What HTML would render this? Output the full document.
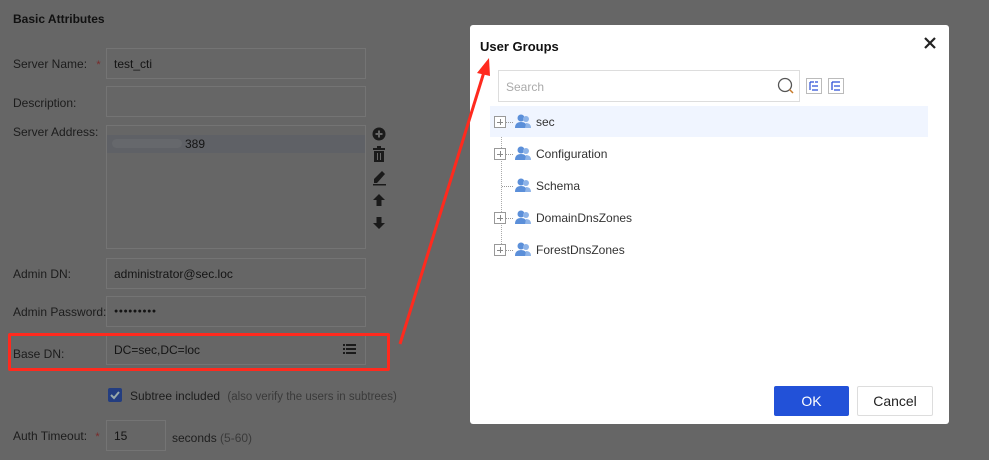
<!DOCTYPE html>
<html><head><meta charset="utf-8"><style>
*{box-sizing:border-box;margin:0;padding:0}
body{width:989px;height:460px;overflow:hidden;background:#666;font-family:"Liberation Sans",Arial,sans-serif;color:#1e1e1e;position:relative}
.a{position:absolute}
.lbl{position:absolute;font-size:12px;color:#1c1c1c;left:13px}
.inp{position:absolute;left:106px;width:260px;height:31px;border:1px solid #747474;background:#666;font-size:12px;padding:8px 0 0 7px;color:#141414}
.star{color:#7a2a2a;font-size:11px}
.dlg{position:absolute;left:470px;top:25px;width:479px;height:399px;background:#fff;border-radius:3px}
.row{position:absolute;left:20px;width:438px;height:31px;font-size:12px;color:#333}
.pb{position:absolute;left:4px;top:10px;width:12px;height:12px;border:1px solid #999;background:#fff}
.pb:before{content:"";position:absolute;left:2px;top:5px;width:6px;height:1px;background:#888}
.pb:after{content:"";position:absolute;left:5px;top:2px;width:1px;height:6px;background:#888}
.dot{position:absolute;left:16px;top:16px;width:7px;border-top:1px dotted #999}
.ic{position:absolute;left:25px;top:8px}
.tx{position:absolute;left:46px;top:9px}
</style></head><body>
<div class="a" style="left:13px;top:12px;font-size:12px;font-weight:bold;color:#111">Basic Attributes</div>
<div class="lbl" style="top:57px">Server Name: <span class="star" style="margin-left:6px">*</span></div>
<div class="inp" style="top:48px">test_cti</div>
<div class="lbl" style="top:96px">Description:</div>
<div class="inp" style="top:86px"></div>
<div class="lbl" style="top:125px">Server Address:</div>
<div class="inp" style="top:125px;height:124px;padding:0"><div class="a" style="left:0;top:9px;width:258px;height:18px;background:#5f6166"></div><div class="a" style="left:5px;top:13px;width:70px;height:9px;background:#66686c;border-radius:5px"></div><div class="a" style="left:78px;top:11px;font-size:12px">389</div></div>
<svg class="a" style="left:372px;top:126px" width="16" height="106" viewBox="0 0 16 106" fill="#1a1a1a">
<circle cx="7" cy="8" r="6.5"/><rect x="3.5" y="7" width="7" height="2" fill="#666"/><rect x="6" y="4.5" width="2" height="7" fill="#666"/>
<rect x="1" y="22" width="12" height="2"/><rect x="5" y="20" width="4" height="2"/><rect x="2" y="25" width="10" height="11"/><rect x="5" y="27" width="1" height="7" fill="#666"/><rect x="8" y="27" width="1" height="7" fill="#666"/>
<path d="M2 57 L2 53 L10 45 L13 48 L5 57Z"/><rect x="1" y="58" width="13" height="1.5"/>
<path d="M7 68 L13 74 L9.5 74 L9.5 80 L4.5 80 L4.5 74 L1 74Z"/>
<path d="M7 103 L13 97 L9.5 97 L9.5 91 L4.5 91 L4.5 97 L1 97Z"/>
</svg>
<div class="lbl" style="top:267px">Admin DN:</div>
<div class="inp" style="top:258px">administrator@sec.loc</div>
<div class="lbl" style="top:305px">Admin Password:</div>
<div class="inp" style="top:296px;font-size:7px;letter-spacing:0.5px;padding-top:11px">●●●●●●●●●</div>
<div class="lbl" style="top:347px">Base DN:</div>
<div class="inp" style="top:334px">DC=sec,DC=loc</div>
<svg class="a" style="left:343px;top:344px" width="13" height="10" fill="#1a1a1a"><rect x="0" y="0" width="2" height="2"/><rect x="3" y="0" width="10" height="2"/><rect x="0" y="4" width="2" height="2"/><rect x="3" y="4" width="10" height="2"/><rect x="0" y="8" width="2" height="2"/><rect x="3" y="8" width="10" height="2"/></svg>
<div class="a" style="left:8px;top:333px;width:382px;height:38px;border:3px solid #ff2a1e;border-radius:2px"></div>
<div class="a" style="left:108px;top:388px;width:14px;height:14px;background:#233d80;border-radius:2px"></div>
<svg class="a" style="left:108px;top:388px" width="14" height="14"><path d="M3 7 L6 10 L11 4" stroke="#9aa" stroke-width="2" fill="none"/></svg>
<div class="a" style="left:130px;top:389px;font-size:12px;color:#1c1c1c">Subtree included <span style="color:#3a3a3a;font-size:11.5px;margin-left:4px">(also verify the users in subtrees)</span></div>
<div class="lbl" style="top:429px">Auth Timeout: <span class="star" style="margin-left:5px">*</span></div>
<div class="inp" style="top:420px;width:60px">15</div>
<div class="a" style="left:172px;top:431px;font-size:12px">seconds <span style="color:#3a3a3a">(5-60)</span></div>
<div class="dlg">
<div class="a" style="left:10px;top:14px;font-size:13px;font-weight:bold;color:#111">User Groups</div>
<svg class="a" style="left:454px;top:12px" width="12" height="12"><path d="M1 1L11 11M11 1L1 11" stroke="#222" stroke-width="2.2"/></svg>
<div class="a" style="left:28px;top:45px;width:302px;height:32px;border:1px solid #ddd;font-size:12px;color:#aaa;padding:9px 0 0 7px">Search</div>
<svg class="a" style="left:307px;top:52px" width="18" height="18"><circle cx="8" cy="8" r="6.5" stroke="#555" stroke-width="1.3" fill="none"/><path d="M12.5 12.5L16 16" stroke="#c87a2a" stroke-width="1.5"/></svg>
<svg class="a" style="left:336px;top:53px" width="40" height="16"><rect x=".5" y=".5" width="15" height="15" fill="#fff" stroke="#bbb"/><path d="M4 4h4M4 4v8M6 8h6M6 12h6M9 4h3" stroke="#2c4fd6" stroke-width="1.2"/><rect x="22.5" y=".5" width="15" height="15" fill="#fff" stroke="#bbb"/><path d="M26 4v8M26 4h8M28 8h6M28 12h6" stroke="#2c4fd6" stroke-width="1.3"/></svg>
<div class="a" style="left:31px;top:81px;height:148px;border-left:1px dotted #aaa"></div>
<div class="row" style="top:81px;background:#f0f5ff"><div class="pb"></div><div class="dot"></div><svg class="ic" width="16" height="14"><circle cx="6" cy="4" r="3.5" fill="#5b8fd9"/><path d="M0 14 Q0 8 6 8 Q12 8 12 14Z" fill="#5b8fd9"/><circle cx="11" cy="5" r="3" fill="#8db3e8"/><path d="M10 14 Q16 14 16 14 Q16 9 11 9Z" fill="#8db3e8"/></svg><div class="tx">sec</div></div>
<div class="row" style="top:113px"><div class="pb"></div><div class="dot"></div><svg class="ic" width="16" height="14"><circle cx="6" cy="4" r="3.5" fill="#5b8fd9"/><path d="M0 14 Q0 8 6 8 Q12 8 12 14Z" fill="#5b8fd9"/><circle cx="11" cy="5" r="3" fill="#8db3e8"/><path d="M10 14 Q16 14 16 14 Q16 9 11 9Z" fill="#8db3e8"/></svg><div class="tx">Configuration</div></div>
<div class="row" style="top:145px"><div class="dot" style="left:12px;width:11px"></div><svg class="ic" width="16" height="14"><circle cx="6" cy="4" r="3.5" fill="#5b8fd9"/><path d="M0 14 Q0 8 6 8 Q12 8 12 14Z" fill="#5b8fd9"/><circle cx="11" cy="5" r="3" fill="#8db3e8"/><path d="M10 14 Q16 14 16 14 Q16 9 11 9Z" fill="#8db3e8"/></svg><div class="tx">Schema</div></div>
<div class="row" style="top:177px"><div class="pb"></div><div class="dot"></div><svg class="ic" width="16" height="14"><circle cx="6" cy="4" r="3.5" fill="#5b8fd9"/><path d="M0 14 Q0 8 6 8 Q12 8 12 14Z" fill="#5b8fd9"/><circle cx="11" cy="5" r="3" fill="#8db3e8"/><path d="M10 14 Q16 14 16 14 Q16 9 11 9Z" fill="#8db3e8"/></svg><div class="tx">DomainDnsZones</div></div>
<div class="row" style="top:209px"><div class="pb"></div><div class="dot"></div><svg class="ic" width="16" height="14"><circle cx="6" cy="4" r="3.5" fill="#5b8fd9"/><path d="M0 14 Q0 8 6 8 Q12 8 12 14Z" fill="#5b8fd9"/><circle cx="11" cy="5" r="3" fill="#8db3e8"/><path d="M10 14 Q16 14 16 14 Q16 9 11 9Z" fill="#8db3e8"/></svg><div class="tx">ForestDnsZones</div></div>
<div class="a" style="left:304px;top:361px;width:75px;height:30px;background:#2251d8;border-radius:2px;color:#fff;font-size:14px;text-align:center;line-height:30px">OK</div>
<div class="a" style="left:387px;top:361px;width:76px;height:30px;border:1px solid #ddd;border-radius:2px;color:#222;font-size:14px;text-align:center;line-height:28px">Cancel</div>
</div>
<svg class="a" style="left:0;top:0" width="989" height="460"><line x1="400" y1="344" x2="484" y2="72" stroke="#ff2a1e" stroke-width="3"/><path d="M489 58 L477 73 L490 76Z" fill="#ff2a1e"/></svg>
</body></html>
